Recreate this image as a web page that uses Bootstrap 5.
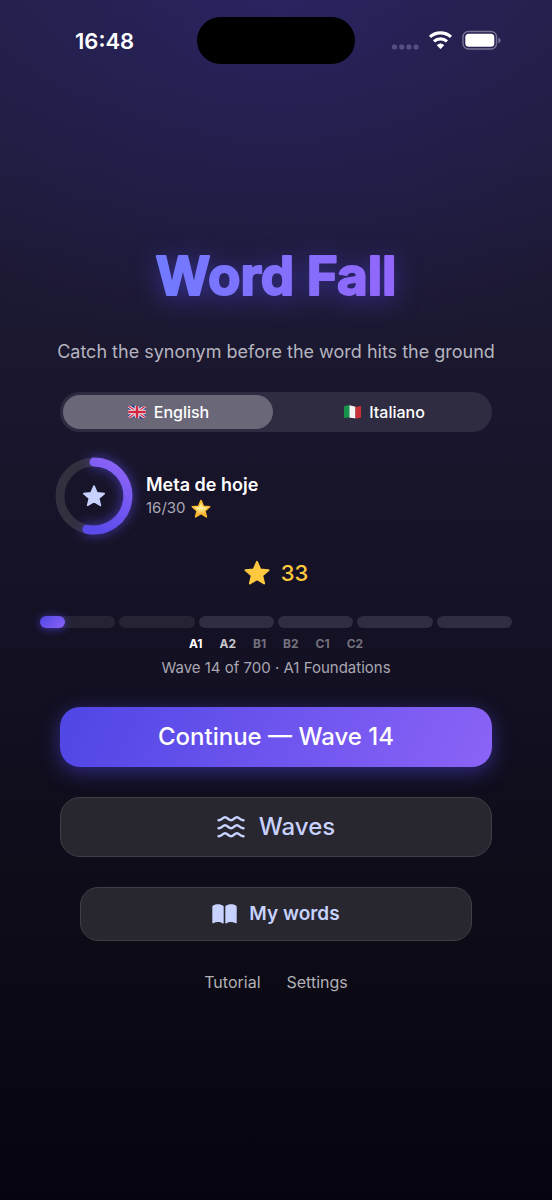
<!DOCTYPE html>
<html lang="en" data-bs-theme="dark">
<head>
<meta charset="utf-8">
<meta name="viewport" content="width=device-width, initial-scale=1">
<title>Word Fall</title>
<link href="https://cdn.jsdelivr.net/npm/bootstrap@5.3.0/dist/css/bootstrap.min.css" rel="stylesheet">
<style>
  body {
    font-family: Inter, "Liberation Sans", sans-serif;
    color: #fff;
    background:
      radial-gradient(ellipse 90% 360px at 50% 0, rgba(54, 46, 160, .34), transparent),
      linear-gradient(#221e3e 0, #1a172f 360px, #151226 600px, #0c0b16 940px, #05040f 100%) #05040f;
  }
  svg { display: block; flex: none; }
  .status-bar { padding: 17px 49px 0; }
  .status-side { flex: 1 1 0; }
  .status-time { font-size: 22px; line-height: 30px; font-weight: 600; padding-left: 26px; }
  .island { width: 158px; height: 47px; border-radius: 24px; background: #000; }
  .page-body { padding: 180px 40px 40px; }
  .game-title { filter: drop-shadow(0 4px 12px rgba(79, 70, 229, .5)); }
  .game-title text { font-weight: 700; font-size: 53px; stroke-width: 2px; stroke-linejoin: round; }
  .tagline { font-size: 18px; line-height: 28px; color: #b5b4be; margin: 28px -20px 0; }
  .inset { margin-left: 20px; margin-right: 20px; }
  .inset-deep { margin-left: 40px; margin-right: 40px; }
  .lang-switch { margin-top: 26px; padding: 3px; gap: 6px; height: 40px; border-radius: 20px; background: #2f2c41; }
  .lang-switch .btn { font-size: 16px; line-height: 24px; font-weight: 500; color: #fff; border: 0; border-radius: 18px; padding: 0; gap: 7px; }
  .lang-switch .btn-check:checked + .btn { background: #6a6779; color: #fff; }
  .goal { margin: 25px 15px 0; gap: 5px; }
  .goal-ring { margin: -5px; overflow: visible; }
  .goal-arc { filter: drop-shadow(0 0 6px rgba(91, 78, 240, .7)); }
  .goal-name { font-size: 18px; line-height: 24px; font-weight: 600; }
  .goal-count { font-size: 15px; line-height: 22px; color: #aaa9b4; gap: 5px; }
  .score { margin-top: 23px; font-size: 22px; line-height: 30px; font-weight: 500; color: #ffc93f; gap: 11px; }
  .levels { margin-top: 28px; gap: 4px; }
  .levels .progress { height: 12px; border-radius: 6px; background: #2f2d3f; overflow: visible; }
  .levels .progress.open { background: #252334; }
  .levels .progress-bar { border-radius: 6px; background: linear-gradient(135deg, #4f46e5, #8b63f7); box-shadow: 0 1px 8px rgba(79, 70, 229, .7); }
  .level-names { margin-top: 8px; gap: 17px; font-size: 12px; line-height: 16px; font-weight: 700; color: #74727e; }
  .level-names .now { color: #fff; }
  .level-names .next { color: #c9c8cf; }
  .wave-info { font-size: 15px; line-height: 20px; color: #a9a7b1; margin-top: 6px; }
  .menu { margin-top: 29px; gap: 30px; }
  .menu-btn { border-radius: 20px; font-size: 24px; line-height: 30px; font-weight: 500; padding: 14px; gap: 14px; color: #c7d2fe; background: #28262f; border: 1px solid #403e47; }
  .menu-btn:hover { color: #fff; background: #33313b; }
  .menu-btn.primary { color: #fff; background: linear-gradient(115deg, #4f46e5, #8b63f7) border-box; border-color: transparent; box-shadow: 0 5px 20px rgba(79, 70, 229, .5); }
  .menu-btn.smaller { font-size: 19px; line-height: 26px; padding: 13px; gap: 12px; border-radius: 18px; font-weight: 600; }
  .footer-links { margin-top: 29px; gap: 26px; font-size: 16px; line-height: 24px; }
  .footer-links a { color: #b2b1b6; }
</style>
</head>
<body class="min-vh-100">
<svg width="0" height="0" class="position-absolute" aria-hidden="true">
  <defs>
    <path id="star" d="M12 1.700 15 8.700 22.600 9.400 16.800 14.400 18.600 21.700 12 17.800 5.400 21.700 7.200 14.400 1.400 9.400 9 8.700Z" stroke-width="1.800" stroke-linejoin="round"/>
  </defs>
</svg>
<header class="status-bar d-flex align-items-center">
  <div class="status-side"><div class="status-time">16:48</div></div>
  <div class="island"></div>
  <div class="status-side d-flex justify-content-end align-items-center">
    <svg width="112" height="24" viewBox="0 0 112 24" role="img" aria-label="Wi-Fi on, battery full">
      <g fill="#544f81"><rect x="1" y="15.500" width="5" height="5" rx="1.800"/><rect x="8.200" y="15.500" width="5" height="5" rx="1.800"/><rect x="15.400" y="15.500" width="5" height="5" rx="1.800"/><rect x="22.600" y="15.500" width="5" height="5" rx="1.800"/></g>
      <g transform="translate(1.500 -.5)"><g fill="none" stroke="#fff" stroke-width="3.200"><path d="M37.500 8.400a16 16 0 0 1 21 0"/><path d="M41.500 12.900a9.700 9.700 0 0 1 13 0"/></g>
      <path d="M44.700 16.700a5.200 5.200 0 0 1 6.600 0L48 20.300Z" fill="#fff" stroke="#fff" stroke-width=".8" stroke-linejoin="round"/></g>
      <g transform="translate(1.300 -.7)"><rect x="70.700" y="3.200" width="33.500" height="17.500" rx="5.500" fill="none" stroke="#777396" stroke-width="1.400"/>
      <rect x="73" y="5.500" width="29" height="13" rx="3.500" fill="#fff"/>
      <path d="M106 9.200q2.300 1 2.300 2.900T106 15Z" fill="#777396"/></g>
    </svg>
  </div>
</header>
<main class="page-body text-center">
  <h1 class="game-title m-0 d-flex justify-content-center">
    <svg width="260" height="66" viewBox="0 0 260 66">
      <defs><linearGradient id="titleFill" x1="0" x2="1" y1="0" y2="0"><stop stop-color="#717aff"/><stop offset="1" stop-color="#9366fb"/></linearGradient></defs>
      <text x="130" y="51" text-anchor="middle" fill="url(#titleFill)" stroke="url(#titleFill)">Word Fall</text>
    </svg>
  </h1>
  <p class="tagline">Catch the synonym before the word hits the ground</p>

  <div class="lang-switch inset d-flex" role="group" aria-label="Language">
    <input class="btn-check" type="radio" name="lang" id="lang-en" checked>
    <label class="btn flex-fill w-50 d-flex align-items-center justify-content-center" for="lang-en">
      <svg width="20" height="14" viewBox="0 0 20 14" aria-hidden="true">
        <clipPath id="ukWave"><path d="M1 1Q5-.5 10 1T19 1L18.500 13Q14 14 10 13T1.500 13Z"/></clipPath>
        <g clip-path="url(#ukWave)"><path fill="#26418f" d="M0 0h20v14H0z"/><path d="M0 0 20 14M20 0 0 14" stroke="#eee" stroke-width="3"/><path d="M0 0 20 14M20 0 0 14" stroke="#d32642" stroke-width="1.200"/><path d="M10 0v14M0 7h20" stroke="#eee" stroke-width="4.600"/><path d="M10 0v14M0 7h20" stroke="#d32642" stroke-width="2.600"/></g>
      </svg>
      English
    </label>
    <input class="btn-check" type="radio" name="lang" id="lang-it">
    <label class="btn flex-fill w-50 d-flex align-items-center justify-content-center" for="lang-it">
      <svg width="19" height="14" viewBox="0 0 19 14" aria-hidden="true">
        <clipPath id="itWave"><path d="M1 1.500Q5-.5 9.500 1T18 .7V12.500Q14 14 9.500 13T1 13Z"/></clipPath>
        <g clip-path="url(#itWave)"><path fill="#17934c" d="M0 0h7v14H0z"/><path fill="#f4f4f4" d="M6.500 0h6v14h-6z"/><path fill="#cb3039" d="M12.500 0H19v14h-6.500z"/></g>
      </svg>
      Italiano
    </label>
  </div>

  <section class="goal d-flex align-items-center text-start">
    <svg class="goal-ring" width="96" height="88" viewBox="0 0 96 88" role="img" aria-label="16 of 30">
      <defs><linearGradient id="ringFill" x1=".7" x2=".3" y1="0" y2="1"><stop stop-color="#8b63f7"/><stop offset="1" stop-color="#5b4bec"/></linearGradient></defs>
      <circle cx="44" cy="44" r="34" fill="none" stroke="#32303f" stroke-width="9"/>
      <path class="goal-arc" d="M44 10A34 34 0 1 1 37 77.300" fill="none" stroke="url(#ringFill)" stroke-width="9" stroke-linecap="round"/>
      <use href="#star" fill="#c7d2fe" stroke="#c7d2fe" transform="translate(32.500 32.500) scale(.96)"/>
    </svg>
    <div>
      <div class="goal-name">Meta de hoje</div>
      <div class="goal-count d-flex align-items-center">16/30
        <svg width="20" height="19" viewBox="0 0 24 23" aria-hidden="true">
          <defs><linearGradient id="goldFill" x1="0" x2="0" y1="0" y2="1"><stop stop-color="#ffd24a"/><stop offset=".45" stop-color="#fff0a0"/><stop offset="1" stop-color="#f59c12"/></linearGradient></defs>
          <use href="#star" fill="url(#goldFill)" stroke="#fdb92c"/>
        </svg>
      </div>
    </div>
  </section>

  <div class="score d-flex align-items-center justify-content-center">
    <svg width="26" height="26" viewBox="0 0 24 24" aria-hidden="true"><use href="#star" fill="#ffc93f" stroke="#ffc93f"/></svg>33
  </div>

  <div class="levels d-flex" aria-label="Levels">
    <div class="progress open flex-fill" role="progressbar" aria-label="A1"><div class="progress-bar" style="width:33%"></div></div>
    <div class="progress open flex-fill" role="progressbar" aria-label="A2"></div>
    <div class="progress flex-fill" role="progressbar" aria-label="B1"></div>
    <div class="progress flex-fill" role="progressbar" aria-label="B2"></div>
    <div class="progress flex-fill" role="progressbar" aria-label="C1"></div>
    <div class="progress flex-fill" role="progressbar" aria-label="C2"></div>
  </div>
  <div class="level-names d-flex justify-content-center">
    <span class="now">A1</span><span class="next">A2</span><span>B1</span><span>B2</span><span>C1</span><span>C2</span>
  </div>
  <p class="wave-info mb-0">Wave 14 of 700 · A1 Foundations</p>

  <div class="menu d-grid">
    <button type="button" class="btn menu-btn primary inset">Continue — Wave 14</button>
    <button type="button" class="btn menu-btn inset d-flex align-items-center justify-content-center">
      <svg width="28" height="22" viewBox="0 0 28 22" fill="none" stroke="#c7d2fe" stroke-width="2.400" stroke-linecap="round" aria-hidden="true"><path id="wave" d="M1.500 4.200C5 4.200 5.500 1.300 8 1.300s3.500 2.900 6 2.900 3.500-2.900 6-2.900 3 2.900 6.500 2.900"/><use href="#wave" y="8"/><use href="#wave" y="16"/></svg>
      Waves
    </button>
    <button type="button" class="btn menu-btn smaller inset-deep d-flex align-items-center justify-content-center">
      <svg width="25" height="20" viewBox="0 0 25 20" fill="#c7d2fe" aria-hidden="true"><path d="M11.700 2.200C10 .7 8 .2 6 .2S2.500.7 1.100 1.600Q.3 2.100.3 3v15.600q0 1 1.100.6c3-1.500 6.600-1.500 9.200.2.700.3 1.100 0 1.100-.6ZM13.300 2.200C15 .7 17 .2 19 .2s3.500.5 4.900 1.400q.8.500.8 1.400v15.600q0 1-1.100.6c-3-1.500-6.600-1.500-9.200.2-.7.3-1.100 0-1.100-.6Z"/></svg>
      My words
    </button>
  </div>
  <nav class="footer-links d-flex justify-content-center">
    <a href="#tutorial" class="text-decoration-none">Tutorial</a>
    <a href="#settings" class="text-decoration-none">Settings</a>
  </nav>
</main>
<script src="https://cdn.jsdelivr.net/npm/bootstrap@5.3.0/dist/js/bootstrap.bundle.min.js"></script>
</body>
</html>
